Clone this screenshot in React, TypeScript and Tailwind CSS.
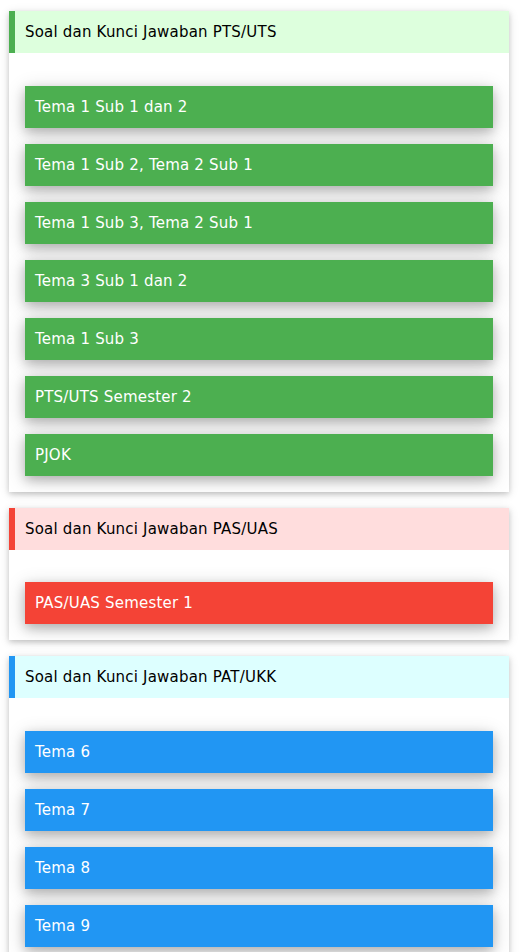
import React from "react";

type Section = {
  title: string;
  headerClass: string;
  buttonClass: string;
  items: string[];
};

const sections: Section[] = [
  {
    title: "Soal dan Kunci Jawaban PTS/UTS",
    headerClass: "bg-[#ddffdd] border-[#4caf50]",
    buttonClass: "bg-[#4caf50]",
    items: [
      "Tema 1 Sub 1 dan 2",
      "Tema 1 Sub 2, Tema 2 Sub 1",
      "Tema 1 Sub 3, Tema 2 Sub 1",
      "Tema 3 Sub 1 dan 2",
      "Tema 1 Sub 3",
      "PTS/UTS Semester 2",
      "PJOK",
    ],
  },
  {
    title: "Soal dan Kunci Jawaban PAS/UAS",
    headerClass: "bg-[#ffdddd] border-[#f44336]",
    buttonClass: "bg-[#f44336]",
    items: ["PAS/UAS Semester 1"],
  },
  {
    title: "Soal dan Kunci Jawaban PAT/UKK",
    headerClass: "bg-[#ddffff] border-[#2196f3]",
    buttonClass: "bg-[#2196f3]",
    items: ["Tema 6", "Tema 7", "Tema 8", "Tema 9"],
  },
];

const App: React.FC = () => {
  return (
    <div className="min-h-screen bg-white pt-[11px] text-[15px] tracking-[0.2px] font-['Verdana','DejaVu_Sans',sans-serif] text-black">
      {sections.map((s) => (
        <div
          key={s.title}
          className="ml-[9px] mb-4 w-[500px] bg-white shadow-[0_2px_5px_0_rgba(0,0,0,0.16),0_2px_10px_0_rgba(0,0,0,0.12)]"
        >
          {/* Header */}
          <div className={`h-[42px] flex items-center border-l-[6px] pl-[10px] pt-[1px] ${s.headerClass}`}>
            {s.title}
          </div>

          {/* Links */}
          <div className="flex flex-col gap-4 px-4 pt-[32.5px] pb-4">
            {s.items.map((item) => (
              <div
                key={item}
                className={`h-[42px] flex items-center pl-[10px] pt-[1px] text-white shadow-[0_4px_10px_0_rgba(0,0,0,0.2),0_4px_20px_0_rgba(0,0,0,0.19)] ${s.buttonClass}`}
              >
                {item}
              </div>
            ))}
          </div>
        </div>
      ))}
    </div>
  );
};

export default App;
